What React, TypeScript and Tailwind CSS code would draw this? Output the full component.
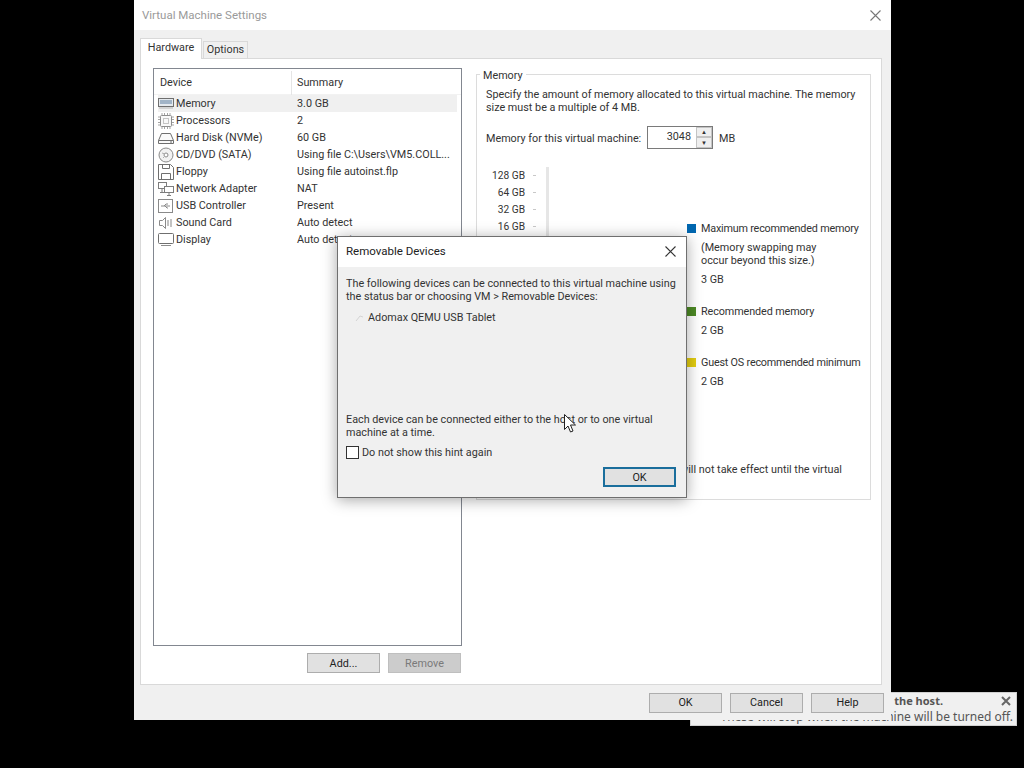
import React from 'react';

const stroke = '#6f6f6f';

const MemoryIcon = () => (
  <svg width="16" height="16" viewBox="0 0 16 16" fill="none" stroke={stroke}>
    <rect x="0.5" y="2.5" width="15" height="8" fill="#e4e9ee" />
    <path d="M2 5h12M2 7h12" stroke="#5f7f9f" />
    <path d="M1 12h14" stroke="#b5b5b5" />
  </svg>
);
const CpuIcon = () => (
  <svg width="16" height="16" viewBox="0 0 16 16" fill="none" stroke={stroke}>
    <rect x="2.5" y="2.5" width="11" height="11" rx="1" fill="#f8f8f8" stroke="#8d8d8d" />
    <path d="M4 0v2M6.5 0v2M9.5 0v2M12 0v2M4 14v2M6.5 14v2M9.5 14v2M12 14v2M0 4h2M0 6.5h2M0 9.5h2M0 12h2M14 4h2M14 6.5h2M14 9.5h2M14 12h2" stroke="#a5a5a5" />
    <rect x="5.5" y="5.5" width="5" height="5" stroke="#c4c4c4" />
  </svg>
);
const DiskIcon = () => (
  <svg width="16" height="16" viewBox="0 0 16 16" fill="none" stroke={stroke}>
    <path d="M3.5 3.5h9l3 7v3h-15v-3z" fill="#fafafa" />
    <path d="M0.5 10.5h15M12 12h2" />
  </svg>
);
const CdIcon = () => (
  <svg width="16" height="16" viewBox="0 0 16 16" fill="none" stroke="#8a8a8a">
    <circle cx="8" cy="8" r="7" fill="#f2f2f2" />
    <circle cx="8" cy="8" r="2" fill="#fff" />
    <path d="M4 6l3 1M5 11l2-2" stroke="#b0b0b0" />
  </svg>
);
const FloppyIcon = () => (
  <svg width="16" height="16" viewBox="0 0 16 16" fill="none" stroke={stroke}>
    <path d="M0.5 0.5h12l3 3v12h-15z" fill="#fff" />
    <path d="M4.5 0.5v4h7v-4M3.5 15.5v-6h9v6" />
  </svg>
);
const NetworkIcon = () => (
  <svg width="16" height="16" viewBox="0 0 16 16" fill="none" stroke="#7d7d7d">
    <rect x="0.5" y="1.5" width="8" height="6" fill="#fff" />
    <rect x="6.5" y="5.5" width="9" height="6" fill="#fff" />
    <path d="M4 8v3M2 11.5h4M11 12v2M9 14.5h4" />
  </svg>
);
const UsbIcon = () => (
  <svg width="16" height="16" viewBox="0 0 16 16" fill="none" stroke="#8a8a8a">
    <rect x="0.5" y="1.5" width="14" height="13" fill="#fff" />
    <path d="M3 8h9M6 8l2-2h2M7 8l2 2h1" />
  </svg>
);
const SoundIcon = () => (
  <svg width="16" height="16" viewBox="0 0 16 16" fill="none" stroke="#8a8a8a">
    <path d="M1.5 5.5h3l3-3v11l-3-3h-3z" fill="#fff" />
    <path d="M10 5v6M13 4v8" stroke="#b0b0b0" strokeWidth="1.5" />
  </svg>
);
const DisplayIcon = () => (
  <svg width="17" height="16" viewBox="0 0 17 16" fill="none" stroke={stroke}>
    <rect x="0.5" y="1.5" width="15" height="10" rx="1" fill="#fff" />
    <path d="M3 13.5h10" stroke="#8d8d8d" />
  </svg>
);

const devices = [
  { icon: <MemoryIcon />, name: 'Memory', summary: '3.0 GB' },
  { icon: <CpuIcon />, name: 'Processors', summary: '2' },
  { icon: <DiskIcon />, name: 'Hard Disk (NVMe)', summary: '60 GB' },
  { icon: <CdIcon />, name: 'CD/DVD (SATA)', summary: 'Using file C:\\Users\\VM5.COLL...' },
  { icon: <FloppyIcon />, name: 'Floppy', summary: 'Using file autoinst.flp' },
  { icon: <NetworkIcon />, name: 'Network Adapter', summary: 'NAT' },
  { icon: <UsbIcon />, name: 'USB Controller', summary: 'Present' },
  { icon: <SoundIcon />, name: 'Sound Card', summary: 'Auto detect' },
  { icon: <DisplayIcon />, name: 'Display', summary: 'Auto detect' },
];

// the rest of the scale sits behind the Removable Devices dialog
const scale = ['128 GB', '64 GB', '32 GB', '16 GB'];

const CloseX = ({ color }: { color: string }) => (
  <svg width="11" height="11" viewBox="0 0 11 11" fill="none" stroke={color} strokeWidth="1.1">
    <path d="M0.5 0.5l10 10M10.5 0.5l-10 10" />
  </svg>
);

const DialogButton = ({ label, disabled }: { label: string; disabled?: boolean }) => (
  <button
    className={`w-[73px] h-[20px] flex items-center justify-center border ${
      disabled ? 'bg-[#cccccc] border-[#bfbfbf] text-[#7a7a7a]' : 'bg-[#e1e1e1] border-[#adadad] text-[#222]'
    }`}
  >
    {label}
  </button>
);

const App = () => {
  return (
    <div className="relative w-[1024px] h-[768px] bg-black overflow-hidden text-[10.8px] leading-[13px] text-[#333] font-['Roboto','Noto_Sans',sans-serif]">
      {/* tray notification, mostly behind the settings window */}
      <div className="absolute left-[690px] top-[692px] w-[327px] h-[34px] bg-[#f0f0f0] border border-[#d0d0d0] text-[#555] text-[12px] overflow-hidden font-['Noto_Sans',sans-serif]">
        <div className="absolute right-[73px] top-[1px] text-[11px] font-bold whitespace-nowrap">the host.</div>
        <div className="absolute right-[3px] top-[17px] whitespace-nowrap">These will stop when the machine will be turned off.</div>
        <div className="absolute right-[5px] top-[3px]">
          <svg width="10" height="10" viewBox="0 0 10 10" fill="none" stroke="#666" strokeWidth="2">
            <path d="M1 1l8 8M9 1l-8 8" />
          </svg>
        </div>
      </div>

      {/* Virtual Machine Settings */}
      <div className="absolute left-[134px] top-0 w-[757px] h-[720px] bg-[#f0f0f0] flex flex-col">
        <div className="h-[30px] bg-white flex items-center justify-between pl-[8px] pr-[10px] shrink-0">
          <span className="text-[#9a9a9a] text-[11.5px]">Virtual Machine Settings</span>
          <CloseX color="#777" />
        </div>

        <div className="h-[28px] flex items-end pl-[6px] shrink-0">
          <div className="w-[62px] h-[21px] pb-[3px] bg-white border border-b-0 border-[#d9d9d9] flex items-center justify-center -mb-px z-10">Hardware</div>
          <div className="w-[45px] h-[17px] pb-[1px] ml-px bg-[#f0f0f0] border border-b-0 border-[#d9d9d9] flex items-center justify-center">Options</div>
        </div>

        <div className="ml-[6px] w-[742px] h-[627px] bg-white border border-[#d9d9d9] flex shrink-0">
          <div className="ml-[12px] mt-[9px] w-[309px]">
            <div className="w-[309px] h-[578px] border border-[#828790] bg-white">
              <div className="h-[26px] pt-[2px] flex items-center border-b border-[#f2f2f2]">
                <span className="w-[138px] pl-[6px] border-r border-[#e5e5e5] leading-[24px]">Device</span>
                <span className="pl-[5px]">Summary</span>
              </div>
              <div className="pl-[4px] pr-[4px]">
                {devices.map((d, i) => (
                  <div key={d.name} className={`h-[17px] flex items-center ${i === 0 ? 'bg-[#f0f0f0]' : ''}`}>
                    <span className="w-[18px] shrink-0 flex">{d.icon}</span>
                    <span className="w-[121px] whitespace-nowrap">{d.name}</span>
                    <span className="whitespace-nowrap">{d.summary}</span>
                  </div>
                ))}
              </div>
            </div>
            <div className="mt-[7px] flex justify-end gap-[8px] pr-px">
              <DialogButton label="Add..." />
              <DialogButton label="Remove" disabled />
            </div>
          </div>

          <div className="relative ml-[14px] mt-[15px] w-[395px] h-[426px] border border-[#dcdcdc]">
            <span className="absolute left-[3px] -top-[6px] bg-white px-[3px]">Memory</span>
            <div className="pl-[9px] pt-[13px] w-[385px]">
              Specify the amount of memory allocated to this virtual machine. The memory size must be a multiple of 4 MB.
            </div>
            <div className="pl-[9px] mt-[12px] flex items-center">
              <span className="w-[161px] pt-[2px] whitespace-nowrap">Memory for this virtual machine:</span>
              <div className="w-[66px] h-[23px] border border-[#7a7a7a] flex">
                <span className="flex-1 text-right pr-[5px] leading-[20px]">3048</span>
                <div className="w-[16px] h-[21px] flex flex-col">
                  <div className="h-[10px] bg-[#efefef] border border-[#c4c4c4] flex items-center justify-center text-[6px] leading-none">▲</div>
                  <div className="h-[11px] bg-[#efefef] border border-[#c4c4c4] flex items-center justify-center text-[6px] leading-none">▼</div>
                </div>
              </div>
              <span className="ml-[6px] pt-[2px]">MB</span>
            </div>

            <div className="mt-[18px] flex h-[296px]">
              <div className="w-[48px] shrink-0">
                {scale.map((s) => (
                  <div key={s} className="h-[17px] flex items-center justify-end text-[10.2px]">{s}</div>
                ))}
              </div>
              <div className="w-[11px] shrink-0">
                {scale.map((s) => (
                  <div key={s} className="h-[17px] flex items-center justify-end">
                    <span className="w-[3px] h-px bg-[#c8c8c8]" />
                  </div>
                ))}
              </div>
              <div className="ml-[10px] w-[3px] bg-[#e6e6e6] shrink-0" />
              <div className="ml-[138px] pt-[55px] shrink-0">
                <div className="flex items-center h-[13px]">
                  <span className="w-[9px] h-[9px] bg-[#0067b0] mr-[5px]" />
                  <span className="tracking-[-0.2px]">Maximum recommended memory</span>
                </div>
                <div className="pl-[14px] mt-[6px]">
                  (Memory swapping may<br />occur beyond this size.)
                </div>
                <div className="pl-[14px] mt-[6px]">3 GB</div>
                <div className="flex items-center h-[13px] mt-[19px]">
                  <span className="w-[9px] h-[9px] bg-[#4d8a25] mr-[5px]" />
                  <span className="tracking-[-0.1px]">Recommended memory</span>
                </div>
                <div className="pl-[14px] mt-[6px]">2 GB</div>
                <div className="flex items-center h-[13px] mt-[19px]">
                  <span className="w-[9px] h-[9px] bg-[#e3cd10] mr-[5px]" />
                  <span className="tracking-[-0.2px]">Guest OS recommended minimum</span>
                </div>
                <div className="pl-[14px] mt-[6px]">2 GB</div>
              </div>
            </div>
            <div className="absolute right-[28px] top-[388px] whitespace-nowrap">Changes to the memory will not take effect until the virtual</div>
          </div>
        </div>

        <div className="flex-1 flex items-center justify-end gap-[8px] pr-[7px]">
          <DialogButton label="OK" />
          <DialogButton label="Cancel" />
          <DialogButton label="Help" />
        </div>
      </div>

      {/* Removable Devices modal */}
      <div className="absolute left-[337px] top-[236px] w-[350px] h-[262px] bg-[#f0f0f0] border border-[#6f6f6f] shadow-[0_2px_14px_rgba(0,0,0,0.35)] flex flex-col">
        <div className="h-[30px] pb-[2px] bg-white flex items-center justify-between pl-[8px] pr-[10px] shrink-0 text-[#222] text-[11.5px]">
          <span>Removable Devices</span>
          <CloseX color="#333" />
        </div>
        <div className="flex-1 flex flex-col pl-[8px] pr-[8px] pt-[10px]">
          <div>The following devices can be connected to this virtual machine using the status bar or choosing VM &gt; Removable Devices:</div>
          <div className="flex items-center mt-[8px] pl-[8px]">
            <svg width="14" height="10" viewBox="0 0 14 10" fill="none" stroke="#d4d4d4">
              <path d="M2 8l4-5 3 1" />
            </svg>
            <span>Adomax QEMU USB Tablet</span>
          </div>
          <div className="mt-[89px]">Each device can be connected either to the host or to one virtual machine at a time.</div>
          <label className="flex items-center mt-[7px]">
            <span className="w-[13px] h-[13px] border border-[#333] bg-white mr-[3px]" />
            Do not show this hint again
          </label>
          <div className="mt-[8px] flex justify-end pr-[2px]">
            <button className="w-[73px] h-[20px] bg-[#e1e1e1] border-2 border-[#1a6e9c] text-[#222] flex items-center justify-center">OK</button>
          </div>
        </div>
      </div>

      {/* mouse cursor */}
      <svg className="absolute left-[564px] top-[414px]" width="13" height="20" viewBox="0 0 13 20">
        <path d="M0.5 0.5v15l3.5-3.5 2.5 6 2.5-1-2.5-6h5z" fill="#fff" stroke="#222" />
      </svg>
    </div>
  );
};

export default App;
